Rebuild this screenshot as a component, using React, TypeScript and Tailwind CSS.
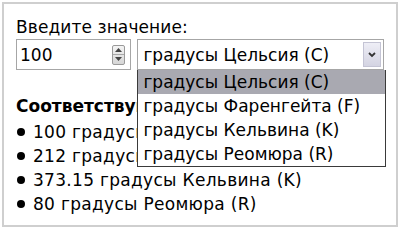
const options = [
  "градусы Цельсия (C)",
  "градусы Фаренгейта (F)",
  "градусы Кельвина (K)",
  "градусы Реомюра (R)",
];

const results = [
  "100 градусы Цельсия (C)",
  "212 градусы Фаренгейта (F)",
  "373.15 градусы Кельвина (K)",
  "80 градусы Реомюра (R)",
];

function Spinner() {
  return (
    <div className="flex h-[20px] w-[13px] flex-col overflow-hidden rounded-[2px] border border-[#9a9a9a] bg-gradient-to-b from-[#f4f4f4] to-[#d6d6d6]">
      <div className="flex flex-1 items-center justify-center border-b border-[#a8a8a8]">
        <svg width="7" height="4" viewBox="0 0 7 4">
          <path d="M0 4 L3.5 0 L7 4 Z" fill="#444" />
        </svg>
      </div>
      <div className="flex flex-1 items-center justify-center">
        <svg width="7" height="4" viewBox="0 0 7 4">
          <path d="M0 0 L3.5 4 L7 0 Z" fill="#444" />
        </svg>
      </div>
    </div>
  );
}

export default function App() {
  return (
    <div className="h-[229px] w-[400px] bg-white p-[2px] font-['DejaVu_Sans',sans-serif] text-[17px] leading-[24px] text-black">
      <div className="h-full border-2 border-[#cfcfcf] px-[12px] pt-[11px]">
        <div className="tracking-[0.1px]">Введите значение:</div>
        <div className="flex h-[31px] items-stretch gap-[6px]">
          <div className="flex w-[116px] items-center border border-[#a6a6a6] bg-white pl-[3px] pr-[5px]">
            <span className="flex-1">100</span>
            <Spinner />
          </div>
          <div className="relative w-[248px]">
            <div className="flex h-full items-center border border-[#a6a6a6] bg-white pl-[5px] pr-[2px]">
              <span className="flex-1 whitespace-nowrap">{options[0]}</span>
              <div className="flex h-[25px] w-[18px] items-center justify-center border border-[#c4c4d4] bg-gradient-to-b from-[#eeeef6] to-[#d4d4e2]">
                <svg width="8" height="6" viewBox="0 0 8 6">
                  <path d="M1 1 L4 4 L7 1" fill="none" stroke="#333" strokeWidth="1.8" />
                </svg>
              </div>
            </div>
            <ul className="absolute left-0 top-full z-10 w-[249px] border border-t-0 border-[#3a3a3a] bg-white">
              {options.map((o, i) => (
                <li
                  key={o}
                  className={
                    "whitespace-nowrap pl-[5px] " + (i === 0 ? "bg-[#a9a9b1]" : "")
                  }
                >
                  {o}
                </li>
              ))}
            </ul>
          </div>
        </div>
        <div className="mt-[24px] font-bold">Соответствующие значения:</div>
        <ul className="mt-[2px]">
          {results.map((r) => (
            <li key={r} className="flex items-center whitespace-nowrap">
              <span className="mr-[8px] ml-[1px] h-[8px] w-[8px] rounded-full bg-black" />
              <span className="tracking-[0.3px]">{r}</span>
            </li>
          ))}
        </ul>
      </div>
    </div>
  );
}
